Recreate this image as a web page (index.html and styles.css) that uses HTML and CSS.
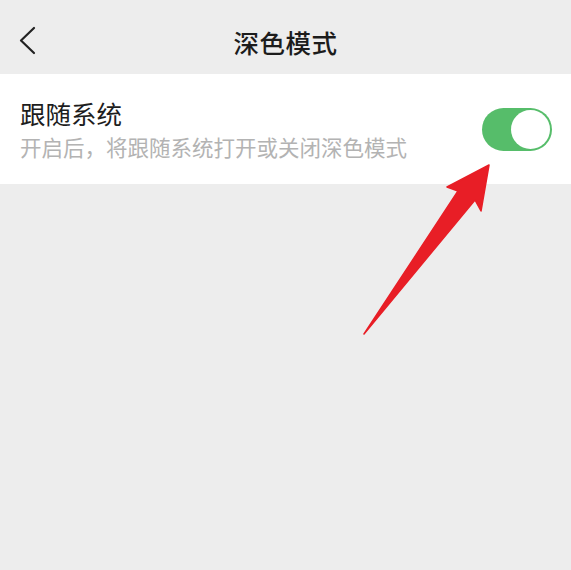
FILE: index.html
```html
<!DOCTYPE html>
<html lang="zh-CN">
<head>
<meta charset="utf-8">
<title>深色模式</title>
<link rel="stylesheet" href="styles.css">
</head>
<body>
<div class="page">
  <header class="nav">
    <svg class="back" width="18" height="30" viewBox="0 0 18 30">
      <polyline points="15,2 2,14.5 15,27" fill="none" stroke="#222" stroke-width="2.2" stroke-linecap="round" stroke-linejoin="round"/>
    </svg>
    <h1 class="nav-title">深色模式</h1>
  </header>
  <section class="card">
    <div class="row-text">
      <div class="row-title">跟随系统</div>
      <div class="row-desc">开启后，将跟随系统打开或关闭深色模式</div>
    </div>
    <div class="switch"><div class="knob"></div></div>
  </section>
  <svg class="arrow" width="571" height="570" viewBox="0 0 571 570">
    <polygon points="489,165 447,187 458,191 364,334 475,200 481,211" fill="#e81e26" stroke="#e81e26" stroke-width="1.5" stroke-linejoin="round"/>
  </svg>
</div>
</body>
</html>
```

FILE: styles.css
```css
html, body {
  margin: 0;
  padding: 0;
}
body {
  background: #ededed;
  font-family: "Noto Sans CJK SC", "Noto Sans", sans-serif;
  width: 571px;
  height: 570px;
  overflow: hidden;
}
.page {
  position: relative;
  width: 571px;
  height: 570px;
}
.nav {
  position: relative;
  height: 74px;
  display: flex;
  align-items: center;
  justify-content: center;
  padding-top: 8px;
  box-sizing: border-box;
}
.back {
  position: absolute;
  left: 19px;
  top: 26px;
}
.nav-title {
  margin: 0;
  font-size: 25.5px;
  font-weight: 500;
  color: #1c1c1c;
  letter-spacing: 0.5px;
}
.card {
  background: #fff;
  height: 110px;
  box-sizing: border-box;
  display: flex;
  align-items: center;
  justify-content: space-between;
  padding: 0 19px 0 20px;
}
.row-title {
  font-size: 25.5px;
  line-height: 32px;
  color: #1d1d1d;
}
.row-desc {
  margin-top: 4px;
  font-size: 21.5px;
  line-height: 28px;
  color: #b3b3b3;
}
.switch {
  width: 70px;
  height: 43px;
  border-radius: 22px;
  background: #56bd6a;
  display: flex;
  align-items: center;
  justify-content: flex-end;
  padding: 0 2px;
  box-sizing: border-box;
}
.knob {
  width: 39px;
  height: 39px;
  border-radius: 50%;
  background: #fff;
}
.arrow {
  position: absolute;
  left: 0;
  top: 0;
  pointer-events: none;
}
```
